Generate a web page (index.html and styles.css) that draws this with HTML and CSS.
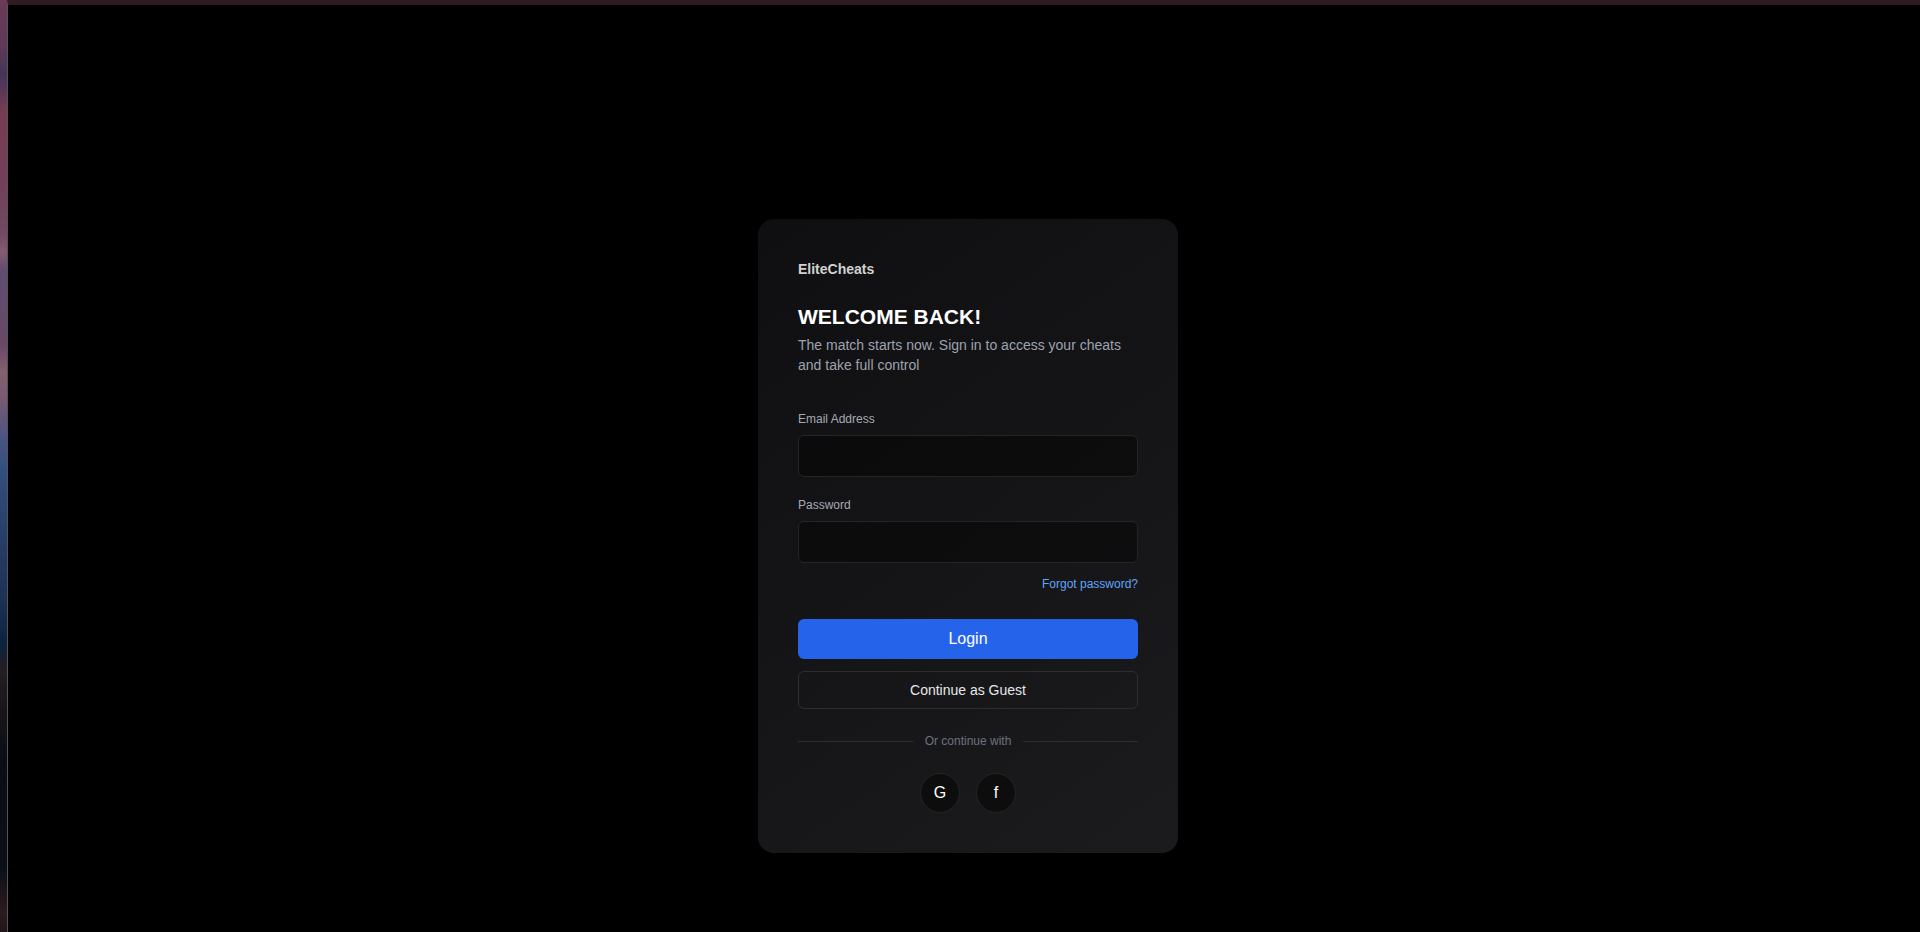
FILE: index.html
```
<!DOCTYPE html>
<html lang="en">
<head>
    <meta charset="UTF-8">
    <meta name="viewport" content="width=device-width, initial-scale=1.0">
    <title>EliteCheats - Login</title>
    <link rel="stylesheet" href="styles.css">
</head>
<body>
    <div class="backdrop">
        <main class="page">
            <form class="login-card">
                <div class="brand">EliteCheats</div>
                <h1>WELCOME BACK!</h1>
                <p class="subtitle">The match starts now. Sign in to access your cheats and take full control</p>

                <div class="field">
                    <label for="email">Email Address</label>
                    <input type="email" id="email">
                </div>
                <div class="field">
                    <label for="password">Password</label>
                    <input type="password" id="password">
                </div>
                <a href="#" class="forgot">Forgot password?</a>

                <button type="submit" class="btn-login">Login</button>
                <button type="button" class="btn-guest">Continue as Guest</button>

                <div class="divider"><span>Or continue with</span></div>

                <div class="socials">
                    <button type="button" aria-label="Continue with Google">G</button>
                    <button type="button" aria-label="Continue with Facebook">f</button>
                </div>
            </form>
        </main>
    </div>
</body>
</html>
```

FILE: styles.css
```
* {
    box-sizing: border-box;
}
body {
    margin: 0;
    background: #000;
    font-family: "Liberation Sans", Arial, sans-serif;
    color: #fff;
}
button, input {
    font-family: inherit;
}
/* Sunset strip left of the panel */
.backdrop {
    display: flex;
    min-height: 100vh;
    padding-left: 7px;
    background: linear-gradient(to bottom,
        #6b3a57 0%, #5c3a58 5%, #453559 8%, #773c54 12%, #733f59 20%,
        #6f4a62 25%, #865a72 27%, #5f4d70 29%, #674967 37%, #85606f 40%,
        #765a73 43%, #4a5384 47%, #34507f 50%, #263d66 58%, #1d3255 64%,
        #0c233f 69%, #251d21 72%, #191619 76%, #080d16 82%, #0b0f17 93%,
        #2d1a1c 98%, #21161a 100%);
}
.page {
    flex: 1;
    padding: 214px 0 79px 8px;
    border-left: 1px solid #56525a;
    border-top: 5px solid #2d1d22;
    background: #000;
    background-clip: padding-box;
}
.login-card {
    display: flex;
    flex-direction: column;
    width: 100%;
    max-width: 420px;
    margin: 0 auto;
    padding: 40px;
    border-radius: 16px;
    background: linear-gradient(145deg, #0f0f11, #1b1b1d);
}
.brand {
    margin-bottom: 24px;
    font-size: 14px;
    font-weight: bold;
    line-height: 20px;
    color: #d1d1d1;
}
h1 {
    margin: 0 0 4px;
    font-size: 21px;
    line-height: 28px;
}
.subtitle {
    margin: 0 0 36px;
    font-size: 14px;
    line-height: 20px;
    color: #9ca3af;
}
.field {
    display: flex;
    flex-direction: column;
    gap: 8px;
    margin-bottom: 20px;
}
.field label {
    font-size: 12px;
    line-height: 16px;
    color: #a3aab5;
}
.field input {
    height: 42px;
    padding: 0 12px;
    border: 1px solid #242426;
    border-radius: 6px;
    background: rgba(0, 0, 0, 0.4);
    color: #fff;
    font-size: 14px;
}
.forgot {
    align-self: flex-end;
    margin: -8px 0 26px;
    font-size: 12px;
    line-height: 18px;
    color: #60a5fa;
    text-decoration: none;
}
.btn-login {
    height: 40px;
    margin-bottom: 12px;
    border: none;
    border-radius: 6px;
    background: #2563eb;
    color: #fff;
    font-size: 16px;
}
.btn-guest {
    height: 38px;
    border: 1px solid #2d2d2f;
    border-radius: 6px;
    background: transparent;
    color: #e5e7eb;
    font-size: 14px;
}
.divider {
    display: flex;
    align-items: center;
    gap: 12px;
    margin: 24px 0;
    font-size: 12px;
    line-height: 16px;
    color: #6b7280;
}
.divider::before,
.divider::after {
    content: "";
    flex: 1;
    height: 1px;
    background: #2d2d2f;
}
.socials {
    display: flex;
    justify-content: center;
    gap: 16px;
}
.socials button {
    width: 40px;
    height: 40px;
    padding: 0;
    border: 1px solid #242426;
    border-radius: 50%;
    background: #0d0d0e;
    color: #fff;
    font-size: 16px;
}
```
